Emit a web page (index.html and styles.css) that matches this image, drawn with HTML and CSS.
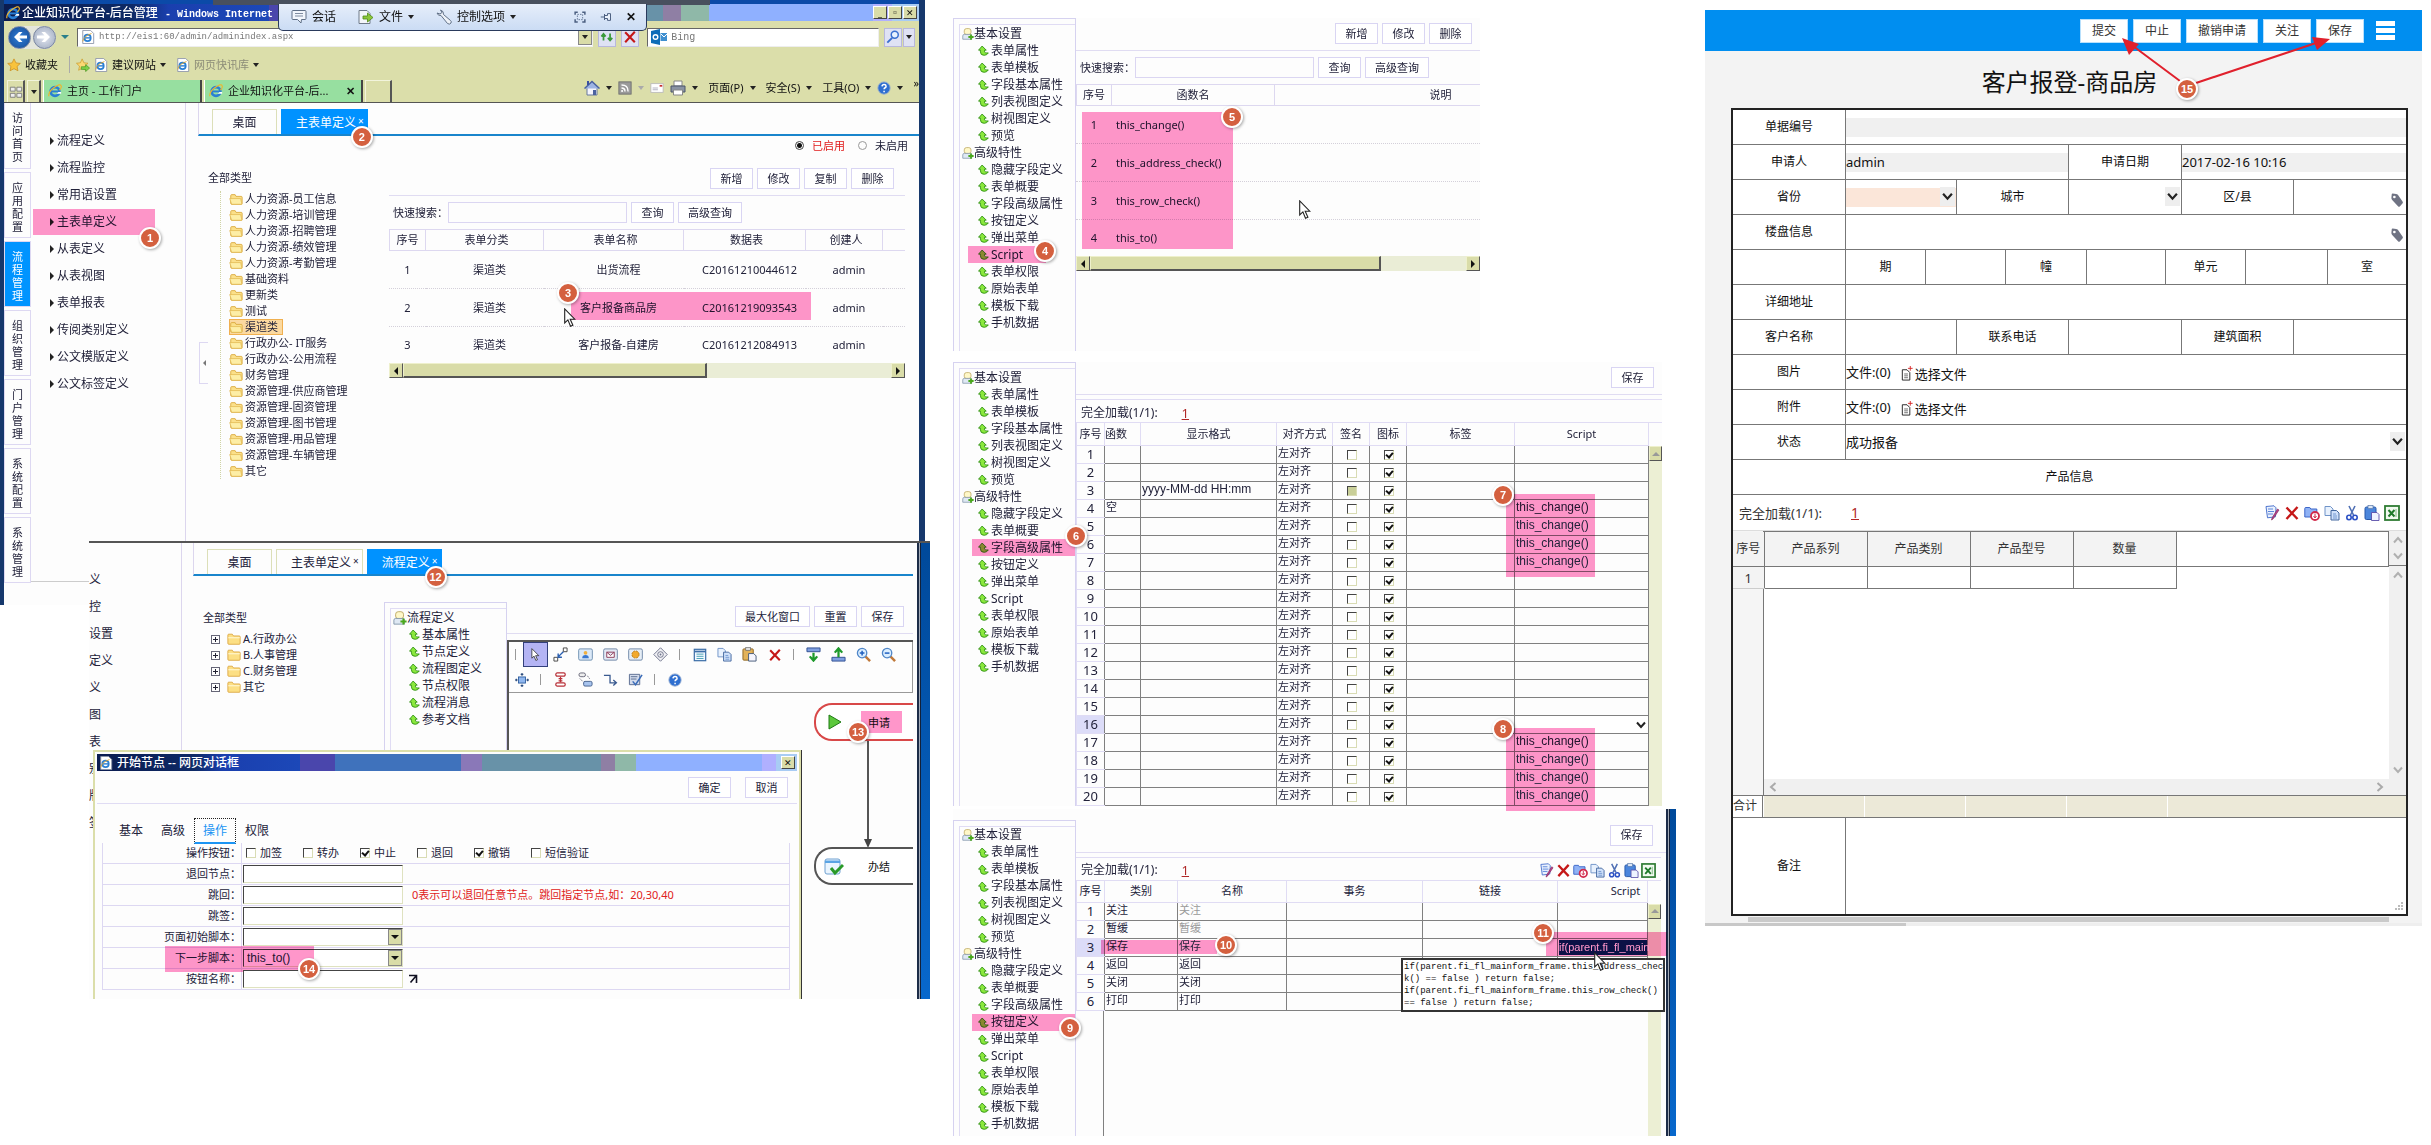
FILE: index.html
```html
<!DOCTYPE html>
<html lang="zh-CN">
<head>
<meta charset="utf-8">
<title>企业知识化平台-后台管理</title>
<link rel="stylesheet" href="styles.css">
</head>
<body>
<svg class="sprite" aria-hidden="true">
  <symbol id="ie" viewBox="0 0 16 16"><circle cx="8" cy="8.500" r="5" fill="none" stroke="#2a7fd4" stroke-width="3"/><path d="M3 8.500h10" stroke="#2a7fd4" stroke-width="2.200"/><path d="M10 11h5v-2h-3z" fill="#fff"/><path d="M1 14Q0 9 7 4t8-2q1 2-2 5" fill="none" stroke="#f0b52c" stroke-width="1.300"/></symbol>
  <symbol id="iepage" viewBox="0 0 16 16"><path d="M2 .500h9l3.500 3.500v11.500H2z" fill="#fff" stroke="#8a93a8"/><circle cx="7.500" cy="9" r="3.600" fill="none" stroke="#2a7fd4" stroke-width="2"/><path d="M4 9h7" stroke="#2a7fd4" stroke-width="1.600"/><path d="M2 13Q3 7 12 4" fill="none" stroke="#e0a52c"/></symbol>
  <symbol id="folder" viewBox="0 0 16 16"><path d="M2 4q0-1 1-1h4l1 2h6q1 0 1 1v7q0 1-1 1H3q-1 0-1-1z" fill="#fbe08a" stroke="#d9a83a"/><path d="M.800 7.500h12.500l1.500 6.500H3z" fill="#fdeea6" stroke="#e0b44c" stroke-width=".8"/></symbol>
  <symbol id="folderc" viewBox="0 0 16 16"><path d="M1 3.500q0-1 1-1h4l1.500 2H14q1 0 1 1V13q0 1-1 1H2q-1 0-1-1z" fill="#fcdf84" stroke="#dba640"/><path d="M1.500 6.500h13" stroke="#fff3c4" stroke-width="1.500"/></symbol>
  <symbol id="go" viewBox="0 0 16 16"><path d="M6 1.500.800 7.500H3.500V10q0 5 5.500 5 4 0 6-3.500-5 1-5.500-1.500V7.500H12z" fill="#8ae83c" stroke="#2f8f14" stroke-width="1.300" stroke-linejoin="round"/></symbol>
  <symbol id="group" viewBox="0 0 16 16"><rect x="3" y=".800" width="9" height="8" rx="3" fill="#fff8c8" stroke="#b9a45c"/><path d="M1 15V10.500q0-2 2-2h8q2 0 2 2V15z" fill="#dfe9f4" stroke="#7f93a8"/><path d="M12 8.500v7M8.500 12h7" stroke="#4aa81c" stroke-width="2.400"/></symbol>
  <symbol id="edit" viewBox="0 0 16 16"><path d="M2 1.500 10 .800l2 2-.500 9-8 1z" fill="#eaf1fd" stroke="#4f76cf"/><path d="M4 4h5M4 6.500h6M4 9h5" stroke="#5c86dc"/><path d="m15 5-6 9-1.500 1 .500-2 5.500-9z" fill="#b8418c" stroke="#7b2150" stroke-width=".6"/></symbol>
  <symbol id="del" viewBox="0 0 16 16"><path d="M2.500 2.500 13.500 14M13.500 2 2.500 14" stroke="#c51818" stroke-width="2.400" fill="none"/></symbol>
  <symbol id="fdel" viewBox="0 0 16 16"><path d="M.800 3.500q0-1 1-1h4l1 1.500h6v8H.800z" fill="#8fb2f5" stroke="#3d66c8"/><circle cx="11" cy="11" r="4" fill="#fff" stroke="#d12a4a" stroke-width="1.800"/><path d="M11 8.500V12M9.500 11l1.500 2 1.500-2" stroke="#d12a4a" fill="none"/></symbol>
  <symbol id="copy" viewBox="0 0 16 16"><path d="M1 1.500h5.500l2.500 2.500v6.500H1z" fill="#e8f1fd" stroke="#6f93c8"/><path d="M7 5.500h5.500L15 8v7H7z" fill="#cfe1fa" stroke="#44699f"/><path d="M9 9h3M9 11h4M9 13h4" stroke="#5c86c4" stroke-width=".8"/></symbol>
  <symbol id="cut" viewBox="0 0 16 16"><path d="M5 1 9.500 10M11 1 6.500 10" stroke="#4f6fb4" stroke-width="1.600"/><circle cx="5" cy="12.500" r="2.200" fill="none" stroke="#2b50c4" stroke-width="1.600"/><circle cx="11" cy="12.500" r="2.200" fill="none" stroke="#2b50c4" stroke-width="1.600"/></symbol>
  <symbol id="paste" viewBox="0 0 16 16"><rect x="1" y="2" width="11" height="12.500" rx="1.500" fill="#4b86dc" stroke="#2657a8"/><rect x="4" y=".600" width="5" height="3" fill="#dbe6f6" stroke="#5878a8" stroke-width=".7"/><path d="M7.500 7.500H13l2 2v6H7.500z" fill="#eef3ff" stroke="#5a4ea8" stroke-width=".9"/></symbol>
  <symbol id="pasteo" viewBox="0 0 16 16"><rect x="1" y="2" width="11" height="12" rx="1" fill="#e2b25a" stroke="#8c6420"/><rect x="4" y=".600" width="5" height="3" fill="#ddd" stroke="#666" stroke-width=".7"/><path d="M7 7h5.500L15 9.500V15H7z" fill="#f6f6ff" stroke="#445a78"/></symbol>
  <symbol id="xls" viewBox="0 0 16 16"><rect x="1" y="1" width="14" height="14" fill="#f2faf0" stroke="#2f7c33" stroke-width="1.800"/><path d="m4.500 5 6 6.500M10.500 5l-6 6.500" stroke="#1f7a2a" stroke-width="2"/><path d="M12 4v8" stroke="#80b884"/></symbol>
  <symbol id="tag" viewBox="0 0 16 16"><path d="M2 1.500q0-1 1-1l4 .500q1 0 2 1l5.500 8q.700 1-.300 2l-3 3.500q-1 .800-1.800-.200L2.500 8Q1.500 7 1.600 5.500z" fill="#6f7383"/><circle cx="5" cy="4.500" r="1.500" fill="#fff"/></symbol>
  <symbol id="cursor" viewBox="0 0 12 19"><path d="M.700.900v14l3.200-3 2.600 6.300 2.400-1-2.700-6h4.600z" fill="#fff" stroke="#222" stroke-width="1.100"/></symbol>
  <symbol id="file" viewBox="0 0 12 16"><path d="M1 4h5l3 3v8H1z" fill="#fff" stroke="#222"/><path d="M3 8.500h4M3 10.500h4M3 12.500h4" stroke="#444" stroke-width=".8"/><path d="M9.500 0v5M7 2.500h5" stroke="#d62a2a"/></symbol>
  <symbol id="star" viewBox="0 0 16 16"><path d="m8 1 2.200 4.600 5 .600-3.700 3.400 1 5L8 12.200 3.500 14.600l1-5L.800 6.200l5-.600z" fill="#f8c33c" stroke="#c98a1a" stroke-width=".8"/></symbol>
  <symbol id="staradd" viewBox="0 0 16 16"><path d="m7 1 2 4.500 4.700.500-3.500 3.300 1 4.700L7 11.700 3 14l1-4.700L.500 6l4.500-.500z" fill="#fbd873" stroke="#c99a2a" stroke-width=".8"/><path d="M6 10h5V7.500l4.500 4-4.500 4V13H6z" fill="#7fd14a" stroke="#3b8f1c" stroke-width=".7"/></symbol>
  <symbol id="chat" viewBox="0 0 16 16"><path d="M2 1.500h12q1 0 1 1v7q0 1-1 1h-3.500L10 14l-3.500-3.500H2q-1 0-1-1v-7q0-1 1-1z" fill="#f2f6fc" stroke="#5f6f86"/><path d="M4 4.500h8M4 7h8" stroke="#7f8ca0"/></symbol>
  <symbol id="send" viewBox="0 0 16 16"><path d="M1 1.500h8l3 3v10H1z" fill="#f4f6fa" stroke="#6f7a88"/><path d="M5 7h4.500V4l5.500 4.500L9.500 13v-3H5z" fill="#8cc63a" stroke="#4f8a14" stroke-width=".8"/></symbol>
  <symbol id="wrench" viewBox="0 0 16 16"><path d="M1 4q1 3 4 2.500l6.500 8q2 1.500 3.500-.500.800-1.500-.500-2.500L7.500 5.500Q8 2 4.500 1L6 3.500 4 5z" fill="#eef2f8" stroke="#5f6f86"/></symbol>
  <symbol id="full" viewBox="0 0 16 16"><path d="M1.500 5V1.500H5M11 1.500h3.500V5M14.500 11v3.500H11M5 14.500H1.500V11" fill="none" stroke="#4b5f80" stroke-width="2"/><path d="M4.500 4.500h7v7h-7z" fill="none" stroke="#4b5f80" stroke-dasharray="2 1.500"/></symbol>
  <symbol id="pinb" viewBox="0 0 16 16"><path d="M1 8h5M6 4v8M6 6h4V3.500h4v9h-4V10H6z" fill="#eaf1fb" stroke="#4b5f80" stroke-width="1.300"/></symbol>
  <symbol id="arrowl" viewBox="0 0 16 16"><path d="M15 6.500H7.500l3-3.500H7L2 8l5 5h3.500l-3-3.500H15z" fill="#fff"/></symbol>
  <symbol id="refresh" viewBox="0 0 16 16"><path d="M4 12V5M1.500 7.500 4 4.500l2.500 3M11.500 4v7M9 9l2.500 3L14 9" fill="none" stroke="#3b9a3b" stroke-width="2"/></symbol>
  <symbol id="search" viewBox="0 0 16 16"><circle cx="10" cy="5.500" r="4" fill="#e8f2ff" stroke="#3a6fd0" stroke-width="1.700"/><path d="m7 9-5.500 5.500" stroke="#3a6fd0" stroke-width="2.200"/></symbol>
  <symbol id="bing" viewBox="0 0 16 16"><path d="M0 2 9 0v16l-9-2z" fill="#0f6db8"/><circle cx="4.500" cy="8" r="2.300" fill="none" stroke="#fff" stroke-width="1.400"/><path d="M9.500 4H16v8H9.500z" fill="#3f8fd0"/><path d="m10 5 3 3 3-3" fill="none" stroke="#fff"/></symbol>
  <symbol id="quad" viewBox="0 0 16 16"><path d="M1.500 2.500h5.500v4.500H1.500zM9 2.500h5.500v4.500H9zM1.500 9.500h5.500v4.500H1.500zM9 9.500h5.500v4.500H9z" fill="#eee" stroke="#777"/></symbol>
  <symbol id="home" viewBox="0 0 16 16"><path d="M3 8v7h10V8" fill="#f4f4fc" stroke="#66789c"/><path d="M.500 8.500 8 1.500l7.500 7" fill="#9db4e4" stroke="#4a62a0" stroke-width="1.500"/><path d="M9 10h3v5H9z" fill="#4a62a0"/><path d="M3 1h2v4H3z" fill="#3a50a0"/></symbol>
  <symbol id="rss" viewBox="0 0 16 16"><rect x="1" y="1" width="14" height="14" fill="#9a9a9a" stroke="#6c6c6c"/><path d="M4 4.500q7.500 0 7.500 7.500M4 8q4 0 4 4" fill="none" stroke="#fff" stroke-width="1.600"/><circle cx="4.700" cy="11.500" r="1.200" fill="#fff"/></symbol>
  <symbol id="mail" viewBox="0 0 16 16"><rect x="1" y="3" width="14" height="10" fill="#fff" stroke="#bbb"/><path d="M11 4.500h3v2h-3z" fill="#c83030"/><path d="M3 8h6M3 10h6" stroke="#aab"/></symbol>
  <symbol id="print" viewBox="0 0 16 16"><path d="M4 1h8v5H4z" fill="#fff" stroke="#888"/><path d="M1 6h14v6H1z" fill="#8a93a3" stroke="#4a5568"/><path d="M3.500 10h9v5h-9z" fill="#fff" stroke="#888"/></symbol>
  <symbol id="help" viewBox="0 0 16 16"><circle cx="8" cy="8" r="7" fill="#2f6fd0" stroke="#8fa8d0"/><path d="M5.700 6.200q.200-2.200 2.400-2.200t2.300 2q0 1.300-1.500 2-.800.500-.800 1.500M8.100 11v1.800" fill="none" stroke="#fff" stroke-width="1.700"/></symbol>
  <symbol id="link" viewBox="0 0 16 16"><path d="M1 11h4v4H1zM11 1h4v4h-4z" fill="#fff" stroke="#444"/><path d="m11 5-5 5M5.500 7v4h4" fill="none" stroke="#2a5fb0" stroke-width="1.500"/></symbol>
  <symbol id="nuser" viewBox="0 0 16 16"><rect x=".700" y="2" width="14.600" height="12" rx="1.500" fill="#dbe9f8" stroke="#6f8fb0"/><circle cx="8" cy="6.200" r="2" fill="#f0b040"/><path d="M4.500 12q0-3.500 3.500-3.500t3.500 3.500z" fill="#3a78d0"/></symbol>
  <symbol id="nmail" viewBox="0 0 16 16"><rect x=".700" y="2" width="14.600" height="12" rx="1.500" fill="#e4e9f4" stroke="#7088a8"/><path d="M4 5.500h8v5.500H4zM4 5.500 8 9l4-3.500" fill="#fff" stroke="#8c3a58"/></symbol>
  <symbol id="ngear" viewBox="0 0 16 16"><rect x=".700" y="2" width="14.600" height="12" rx="1.500" fill="#e6eef6" stroke="#7088a8"/><circle cx="8" cy="8" r="3.800" fill="#f2a92c" stroke="#b87a14" stroke-dasharray="2 1"/></symbol>
  <symbol id="ndia" viewBox="0 0 16 16"><path d="M8 .800 15.200 8 8 15.200.800 8z" fill="#f0f0f4" stroke="#70748c"/><circle cx="8" cy="8" r="3" fill="none" stroke="#70748c"/><circle cx="8" cy="8" r="1" fill="#70748c"/></symbol>
  <symbol id="form" viewBox="0 0 16 16"><rect x="1.500" y="1.500" width="13" height="13" fill="#f2f8ff" stroke="#3d6fa8" stroke-width="1.400"/><path d="M1.500 4h13" stroke="#3d6fa8" stroke-width="2"/><path d="M4 7h8M4 9.500h8M4 12h8" stroke="#3a9ab0"/></symbol>
  <symbol id="down" viewBox="0 0 16 16"><path d="M1 1h14v4H1z" fill="#7f9fe0" stroke="#304f90"/><path d="M8 6v8M4 10l4 4.500 4-4.500" fill="none" stroke="#1f9a2c" stroke-width="2.400"/></symbol>
  <symbol id="up" viewBox="0 0 16 16"><path d="M1 11h14v4H1z" fill="#7f9fe0" stroke="#304f90"/><path d="M8 11V2M4 6l4-4.500L12 6" fill="none" stroke="#1f9a2c" stroke-width="2.400"/></symbol>
  <symbol id="zin" viewBox="0 0 16 16"><path d="m10 10 5 5" stroke="#c0793a" stroke-width="2.600"/><circle cx="6.500" cy="6.500" r="5" fill="#dcefff" stroke="#4f86c8" stroke-width="1.400"/><path d="M4 6.500h5M6.500 4v5" stroke="#1f5fc0" stroke-width="1.600"/></symbol>
  <symbol id="zout" viewBox="0 0 16 16"><path d="m10 10 5 5" stroke="#c0793a" stroke-width="2.600"/><circle cx="6.500" cy="6.500" r="5" fill="#dcefff" stroke="#4f86c8" stroke-width="1.400"/><path d="M4 6.500h5" stroke="#1f5fc0" stroke-width="1.600"/></symbol>
  <symbol id="fit" viewBox="0 0 16 16"><rect x="4" y="4.500" width="8" height="7" fill="#8fb6ee" stroke="#2a5a9c"/><path d="M8 0v3M8 13v3M0 8h3M13 8h3M6.500 1.500h3M6.500 14.500h3M1.500 6.500v3M14.500 6.500v3" stroke="#2a4a7c" stroke-width="1.300"/></symbol>
  <symbol id="align" viewBox="0 0 16 16"><rect x="3" y="1" width="10" height="3.500" rx="1.500" fill="#fff" stroke="#b83038" stroke-width="1.300"/><rect x="3" y="11.500" width="10" height="3.500" rx="1.500" fill="#fff" stroke="#b83038" stroke-width="1.300"/><path d="M8 5v6M6 7h4M6 9.500h4" stroke="#b83038" stroke-width="1.300"/></symbol>
  <symbol id="stack" viewBox="0 0 16 16"><rect x="1" y="1" width="7" height="4" rx="2" fill="#eee" stroke="#667"/><rect x="6" y="10" width="9" height="5" rx="1.500" fill="#a8c4ee" stroke="#44608c"/><path d="M2 7l3 3M10 4l3 4" stroke="#667" stroke-dasharray="1.500 1"/></symbol>
  <symbol id="step" viewBox="0 0 16 16"><path d="M1 3.500h6.500v8H14M11 8.500l3.300 3-3.300 3" fill="none" stroke="#3a5a90" stroke-width="1.400"/></symbol>
  <symbol id="check" viewBox="0 0 16 16"><path d="M1.500 2.500h11v11h-11z" fill="#d4dcec" stroke="#5a6c90"/><path d="M3 5h7M3 7.500h6" stroke="#5a6c90"/><path d="m5 10 3 3.500L15 3" fill="none" stroke="#3a6cb8" stroke-width="1.600"/></symbol>
  <symbol id="done" viewBox="0 0 20 18"><rect x="1" y="1" width="15" height="15" rx="2" fill="#eaf5ff" stroke="#6fa0d0"/><path d="M1 2.500h15V5H1z" fill="#5aa4e4"/><path d="m7 10 4 5 8-8" fill="none" stroke="#2a9a28" stroke-width="3"/></symbol>
  <symbol id="chev" viewBox="0 0 10 8"><path d="m1 1.500 4 4.500 4-4.500" fill="none" stroke="currentColor" stroke-width="2"/></symbol>
</svg>

<main class="board">
  <div class="col col-left">
    <section class="ie">
      <header class="ie-title bar-gradient">
        <svg class="i14"><use href="#ie"/></svg>
        <h1 class="win-title">企业知识化平台-后台管理 <span class="mono">- Windows Internet</span></h1>
        <span class="win-btns"><button type="button" aria-label="最小化">_</button><button type="button" aria-label="还原">▫</button><button type="button" aria-label="关闭">✕</button></span>
      </header>
      <div class="remote">
        <button type="button"><svg class="i16"><use href="#chat"/></svg>会话</button>
        <button type="button"><svg class="i16"><use href="#send"/></svg>文件<i class="tri"></i></button>
        <button type="button"><svg class="i16"><use href="#wrench"/></svg>控制选项<i class="tri"></i></button>
        <span class="remote-tools"><svg class="i12"><use href="#full"/></svg><svg class="i12"><use href="#pinb"/></svg><b>✕</b></span>
      </div>
      <div class="ie-address">
        <span class="navs"><button type="button" class="nav back" aria-label="后退"><svg class="i16"><use href="#arrowl"/></svg></button><button type="button" class="nav fwd" aria-label="前进"><svg class="i16"><use href="#arrowl"/></svg></button></span>
        <i class="tri teal"></i>
        <label class="url"><svg class="i14"><use href="#iepage"/></svg><input type="text" aria-label="地址" value="http://eis1:60/admin/adminindex.aspx"><button type="button" class="drop" aria-label="展开"><i class="tri"></i></button></label>
        <button type="button" class="abtn" aria-label="刷新"><svg class="i14"><use href="#refresh"/></svg></button>
        <button type="button" class="abtn" aria-label="停止"><svg class="i14"><use href="#del"/></svg></button>
        <label class="url bing"><svg class="i16"><use href="#bing"/></svg><input type="text" aria-label="搜索" value="Bing"></label>
        <button type="button" class="abtn" aria-label="搜索"><svg class="i14"><use href="#search"/></svg></button>
        <button type="button" class="abtn slim" aria-label="搜索选项"><i class="tri"></i></button>
      </div>
      <div class="ie-favs">
        <svg class="i14"><use href="#star"/></svg><span>收藏夹</span><i class="vline"></i>
        <svg class="i14"><use href="#staradd"/></svg>
        <svg class="i14"><use href="#iepage"/></svg><span>建议网站</span><i class="tri"></i>
        <svg class="i14 gap"><use href="#iepage"/></svg><span class="dim">网页快讯库</span><i class="tri"></i>
      </div>
      <div class="ie-tabs">
        <button type="button" class="qt" aria-label="快速导航选项卡"><svg class="i14"><use href="#quad"/></svg></button>
        <button type="button" class="qt qd" aria-label="选项卡列表"><i class="tri"></i></button>
        <a class="ie-tab" href="#portal"><svg class="i14"><use href="#ie"/></svg>主页 - 工作门户</a>
        <a class="ie-tab" href="#admin"><svg class="i14"><use href="#ie"/></svg>企业知识化平台-后...<b>✕</b></a>
        <span class="newtab"></span>
        <div class="cmds">
          <svg class="i16"><use href="#home"/></svg><i class="tri"></i>
          <svg class="i14"><use href="#rss"/></svg><i class="tri pale"></i>
          <svg class="i14"><use href="#mail"/></svg>
          <svg class="i16"><use href="#print"/></svg><i class="tri"></i>
          <span>页面(P)</span><i class="tri"></i>
          <span>安全(S)</span><i class="tri"></i>
          <span>工具(O)</span><i class="tri"></i>
          <svg class="i14"><use href="#help"/></svg><i class="tri"></i><span class="more">»</span>
        </div>
      </div>
      <div class="ie-body">
        <nav class="side">
          <a href="#m1">访<br>问<br>首<br>页</a>
          <a href="#m2">应<br>用<br>配<br>置</a>
          <a href="#m3" class="on">流<br>程<br>管<br>理</a>
          <a href="#m4">组<br>织<br>管<br>理</a>
          <a href="#m5">门<br>户<br>管<br>理</a>
          <a href="#m6">系<br>统<br>配<br>置</a>
          <a href="#m7">系<br>统<br>管<br>理</a>
        </nav>
        <nav class="menu">
          <a href="#a1">流程定义</a>
          <a href="#a2">流程监控</a>
          <a href="#a3">常用语设置</a>
          <a href="#a4" class="rel">主表单定义<span class="hl hl-menu"><b class="pin br">1</b></span></a>
          <a href="#a5">从表定义</a>
          <a href="#a6">从表视图</a>
          <a href="#a7">表单报表</a>
          <a href="#a8">传阅类别定义</a>
          <a href="#a9">公文模版定义</a>
          <a href="#a10">公文标签定义</a>
        </nav>
        <div class="work">
          <div class="tabs">
            <a class="tab" href="#t1">桌面</a>
            <a class="tab on" href="#t2">主表单定义<small>×</small><b class="pin br">2</b></a>
          </div>
          <div class="work-row">
            <div class="cats">
              <p class="cats-title">全部类型</p>
              <ul class="tree open">
                <li><svg class="i14"><use href="#folder"/></svg>人力资源-员工信息</li>
                <li><svg class="i14"><use href="#folder"/></svg>人力资源-培训管理</li>
                <li><svg class="i14"><use href="#folder"/></svg>人力资源-招聘管理</li>
                <li><svg class="i14"><use href="#folder"/></svg>人力资源-绩效管理</li>
                <li><svg class="i14"><use href="#folder"/></svg>人力资源-考勤管理</li>
                <li><svg class="i14"><use href="#folder"/></svg>基础资料</li>
                <li><svg class="i14"><use href="#folder"/></svg>更新类</li>
                <li><svg class="i14"><use href="#folder"/></svg>测试</li>
                <li><span class="sel"><svg class="i14"><use href="#folder"/></svg>渠道类</span></li>
                <li><svg class="i14"><use href="#folder"/></svg>行政办公- IT服务</li>
                <li><svg class="i14"><use href="#folder"/></svg>行政办公-公用流程</li>
                <li><svg class="i14"><use href="#folder"/></svg>财务管理</li>
                <li><svg class="i14"><use href="#folder"/></svg>资源管理-供应商管理</li>
                <li><svg class="i14"><use href="#folder"/></svg>资源管理-固资管理</li>
                <li><svg class="i14"><use href="#folder"/></svg>资源管理-图书管理</li>
                <li><svg class="i14"><use href="#folder"/></svg>资源管理-用品管理</li>
                <li><svg class="i14"><use href="#folder"/></svg>资源管理-车辆管理</li>
                <li><svg class="i14"><use href="#folder"/></svg>其它</li>
              </ul>
              <span class="splitter"><i></i></span>
            </div>
            <div class="list">
              <div class="radios">
                <label class="red"><input type="radio" name="use" checked>已启用</label>
                <label><input type="radio" name="use">未启用</label>
              </div>
              <div class="query">
                <div class="q-btns"><button type="button" class="btn">新增</button><button type="button" class="btn">修改</button><button type="button" class="btn">复制</button><button type="button" class="btn">删除</button></div>
                <div class="q-search"><label for="q1">快速搜索：</label><input id="q1" type="text"><button type="button" class="btn">查询</button><button type="button" class="btn">高级查询</button></div>
                <div class="rel">
                  <table class="qt-table forms">
                    <thead><tr><th>序号</th><th>表单分类</th><th>表单名称</th><th>数据表</th><th>创建人</th><th></th></tr></thead>
                    <tbody>
                      <tr><td>1</td><td>渠道类</td><td>出货流程</td><td>C20161210044612</td><td>admin</td><td></td></tr>
                      <tr><td>2</td><td>渠道类</td><td>客户报备商品房</td><td>C20161219093543</td><td>admin</td><td></td></tr>
                      <tr><td>3</td><td>渠道类</td><td>客户报备-自建房</td><td>C20161212084913</td><td>admin</td><td></td></tr>
                    </tbody>
                  </table>
                  <span class="hl hl-row"><b class="pin tl">3</b></span>
                  <svg class="cursor c-list"><use href="#cursor"/></svg>
                </div>
                <div class="hbar"><i class="sb l"></i><i class="thumb t62"></i><i class="sb r"></i></div>
              </div>
            </div>
          </div>
        </div>
      </div>
    </section>

    <section class="flow">
      <nav class="cutmenu"><span>义</span><span>控</span><span>设置</span><span>定义</span><span>义</span><span>图</span><span>表</span><span>别</span><span>版</span><span>签</span></nav>
      <div class="work">
        <div class="tabs">
          <a class="tab" href="#f1">桌面</a>
          <a class="tab" href="#f2">主表单定义<small>×</small></a>
          <a class="tab on" href="#f3">流程定义<small>×</small><b class="pin br">12</b></a>
        </div>
        <div class="work-row">
          <div class="cats">
            <p class="cats-title">全部类型</p>
            <ul class="tree closed">
              <li><i class="plus"></i><svg class="i14"><use href="#folderc"/></svg>A.行政办公</li>
              <li><i class="plus"></i><svg class="i14"><use href="#folderc"/></svg>B.人事管理</li>
              <li><i class="plus"></i><svg class="i14"><use href="#folderc"/></svg>C.财务管理</li>
              <li><i class="plus"></i><svg class="i14"><use href="#folderc"/></svg>其它</li>
            </ul>
          </div>
          <nav class="navbox nav-flow"><ul>
            <li class="grp"><svg class="i14"><use href="#group"/></svg>流程定义</li>
            <li><svg class="i11"><use href="#go"/></svg>基本属性</li>
            <li><svg class="i11"><use href="#go"/></svg>节点定义</li>
            <li><svg class="i11"><use href="#go"/></svg>流程图定义</li>
            <li><svg class="i11"><use href="#go"/></svg>节点权限</li>
            <li><svg class="i11"><use href="#go"/></svg>流程消息</li>
            <li><svg class="i11"><use href="#go"/></svg>参考文档</li>
          </ul></nav>
          <div class="designer">
            <div class="q-btns"><button type="button" class="btn">最大化窗口</button><button type="button" class="btn">重置</button><button type="button" class="btn">保存</button></div>
            <div class="canvas">
              <div class="tools">
                <div class="toolrow"><i class="sep"></i><b class="t on"><svg class="ptr"><use href="#cursor"/></svg></b><b class="t"><svg class="i15"><use href="#link"/></svg></b><b class="t"><svg class="i15"><use href="#nuser"/></svg></b><b class="t"><svg class="i15"><use href="#nmail"/></svg></b><b class="t"><svg class="i15"><use href="#ngear"/></svg></b><b class="t"><svg class="i15"><use href="#ndia"/></svg></b><i class="sep"></i><b class="t"><svg class="i14"><use href="#form"/></svg></b><b class="t"><svg class="i15"><use href="#copy"/></svg></b><b class="t"><svg class="i15"><use href="#pasteo"/></svg></b><b class="t"><svg class="i14"><use href="#del"/></svg></b><i class="sep"></i><b class="t"><svg class="i15"><use href="#down"/></svg></b><b class="t"><svg class="i15"><use href="#up"/></svg></b><b class="t"><svg class="i15"><use href="#zin"/></svg></b><b class="t"><svg class="i15"><use href="#zout"/></svg></b></div>
                <div class="toolrow"><b class="t"><svg class="i14"><use href="#fit"/></svg></b><i class="sep"></i><b class="t"><svg class="i15"><use href="#align"/></svg></b><b class="t"><svg class="i15"><use href="#stack"/></svg></b><b class="t"><svg class="i15"><use href="#step"/></svg></b><b class="t"><svg class="i15"><use href="#check"/></svg></b><i class="sep"></i><b class="t"><svg class="i14"><use href="#help"/></svg></b></div>
              </div>
              <div class="node start"><svg class="play" viewBox="0 0 14 16"><path d="m1 1 12 7L1 15z" fill="#5cc83c" stroke="#1f7a14"/></svg><span>申请</span><i class="hl hl-node"><b class="pin bl">13</b></i></div>
              <svg class="wire" viewBox="0 0 10 107"><path d="M5 0v98" stroke="#555" stroke-width="2"/><path d="M1 98h8l-4 9z" fill="#444"/></svg>
              <div class="node end"><svg class="done"><use href="#done"/></svg><span>办结</span></div>
            </div>
          </div>
        </div>
      </div>
      <div class="edge"></div>

      <form class="dialog">
        <header class="dlg-title bar-gradient"><svg class="i14"><use href="#iepage"/></svg><h2 class="win-title">开始节点 -- 网页对话框</h2><span class="win-btns"><button type="button" aria-label="关闭">✕</button></span></header>
        <div class="dlg-btns"><button type="button" class="btn">确定</button><button type="button" class="btn">取消</button></div>
        <div class="dlg-tabs"><a href="#d1">基本</a><a href="#d2">高级</a><a href="#d3" class="on">操作</a><a href="#d4">权限</a></div>
        <div class="fields">
          <div class="field"><span class="lab">操作按钮：</span><span class="val checks"><label><input type="checkbox">加签</label><label><input type="checkbox">转办</label><label><input type="checkbox" checked>中止</label><label><input type="checkbox">退回</label><label><input type="checkbox" checked>撤销</label><label><input type="checkbox">短信验证</label></span></div>
          <div class="field"><label class="lab" for="d-a">退回节点：</label><span class="val"><input id="d-a" type="text"></span></div>
          <div class="field"><label class="lab" for="d-b">跳回：</label><span class="val"><input id="d-b" type="text"><em>0表示可以退回任意节点。跳回指定节点,如：20,30,40</em></span></div>
          <div class="field"><label class="lab" for="d-c">跳签：</label><span class="val"><input id="d-c" type="text"></span></div>
          <div class="field"><label class="lab" for="d-d">页面初始脚本：</label><span class="val"><select id="d-d"><option></option></select><i class="selbtn"></i></span></div>
          <div class="field rel"><label class="lab" for="d-e">下一步脚本：</label><span class="val"><select id="d-e"><option>this_to()</option></select><i class="selbtn"></i></span><i class="hl hl-next"><b class="pin br">14</b></i></div>
          <div class="field"><label class="lab" for="d-f">按钮名称：</label><span class="val"><input id="d-f" type="text"><svg class="i10" viewBox="0 0 10 10"><path d="M1 1.500h7.500V9M8 2 2.500 8.500" fill="none" stroke="#112" stroke-width="1.600"/></svg></span></div>
        </div>
      </form>
    </section>
  </div>

  <div class="col col-mid">
    <section class="shot shot-a">
      <nav class="navbox"><ul>
        <li class="grp"><svg class="i12"><use href="#group"/></svg>基本设置</li>
        <li><svg class="i11"><use href="#go"/></svg>表单属性</li>
        <li><svg class="i11"><use href="#go"/></svg>表单模板</li>
        <li><svg class="i11"><use href="#go"/></svg>字段基本属性</li>
        <li><svg class="i11"><use href="#go"/></svg>列表视图定义</li>
        <li><svg class="i11"><use href="#go"/></svg>树视图定义</li>
        <li><svg class="i11"><use href="#go"/></svg>预览</li>
        <li class="grp"><svg class="i12"><use href="#group"/></svg>高级特性</li>
        <li><svg class="i11"><use href="#go"/></svg>隐藏字段定义</li>
        <li><svg class="i11"><use href="#go"/></svg>表单概要</li>
        <li><svg class="i11"><use href="#go"/></svg>字段高级属性</li>
        <li><svg class="i11"><use href="#go"/></svg>按钮定义</li>
        <li><svg class="i11"><use href="#go"/></svg>弹出菜单</li>
        <li><svg class="i11"><use href="#go"/></svg>Script<i class="hl hl-nav short"><b class="pin tr">4</b></i></li>
        <li><svg class="i11"><use href="#go"/></svg>表单权限</li>
        <li><svg class="i11"><use href="#go"/></svg>原始表单</li>
        <li><svg class="i11"><use href="#go"/></svg>模板下载</li>
        <li><svg class="i11"><use href="#go"/></svg>手机数据</li>
      </ul></nav>
      <div class="query">
        <div class="q-btns"><button type="button" class="btn">新增</button><button type="button" class="btn">修改</button><button type="button" class="btn">删除</button></div>
        <div class="q-search"><label for="q2">快速搜索：</label><input id="q2" type="text"><button type="button" class="btn">查询</button><button type="button" class="btn">高级查询</button></div>
        <div class="rel">
          <table class="qt-table funcs">
            <thead><tr><th>序号</th><th>函数名</th><th>说明</th></tr></thead>
            <tbody>
              <tr><td>1</td><td>this_change()</td><td></td></tr>
              <tr><td>2</td><td>this_address_check()</td><td></td></tr>
              <tr><td>3</td><td>this_row_check()</td><td></td></tr>
              <tr><td>4</td><td>this_to()</td><td></td></tr>
            </tbody>
          </table>
          <span class="hl hl-funcs"><b class="pin tr">5</b></span>
          <svg class="cursor c-funcs"><use href="#cursor"/></svg>
        </div>
        <div class="hbar"><i class="sb l"></i><i class="thumb t77"></i><i class="sb r"></i></div>
      </div>
    </section>

    <section class="shot shot-b">
      <nav class="navbox"><ul>
        <li class="grp"><svg class="i12"><use href="#group"/></svg>基本设置</li>
        <li><svg class="i11"><use href="#go"/></svg>表单属性</li>
        <li><svg class="i11"><use href="#go"/></svg>表单模板</li>
        <li><svg class="i11"><use href="#go"/></svg>字段基本属性</li>
        <li><svg class="i11"><use href="#go"/></svg>列表视图定义</li>
        <li><svg class="i11"><use href="#go"/></svg>树视图定义</li>
        <li><svg class="i11"><use href="#go"/></svg>预览</li>
        <li class="grp"><svg class="i12"><use href="#group"/></svg>高级特性</li>
        <li><svg class="i11"><use href="#go"/></svg>隐藏字段定义</li>
        <li><svg class="i11"><use href="#go"/></svg>表单概要</li>
        <li><svg class="i11"><use href="#go"/></svg>字段高级属性<i class="hl hl-nav"><b class="pin above">6</b></i></li>
        <li><svg class="i11"><use href="#go"/></svg>按钮定义</li>
        <li><svg class="i11"><use href="#go"/></svg>弹出菜单</li>
        <li><svg class="i11"><use href="#go"/></svg>Script</li>
        <li><svg class="i11"><use href="#go"/></svg>表单权限</li>
        <li><svg class="i11"><use href="#go"/></svg>原始表单</li>
        <li><svg class="i11"><use href="#go"/></svg>模板下载</li>
        <li><svg class="i11"><use href="#go"/></svg>手机数据</li>
      </ul></nav>
      <div class="sheet">
        <div class="q-btns"><button type="button" class="btn">保存</button></div>
        <div class="pager"><span>完全加载(1/1):</span><a href="#p1">1</a></div>
        <div class="gridwrap">
          <table class="grid fieldsgrid">
            <thead><tr><th>序号</th><th class="lt">函数</th><th>显示格式</th><th>对齐方式</th><th>签名</th><th>图标</th><th>标签</th><th>Script</th></tr></thead>
            <tbody>
              <tr><td>1</td><td></td><td></td><td>左对齐</td><td><input type="checkbox" aria-label="签名"></td><td><input type="checkbox" aria-label="图标" checked></td><td></td><td></td></tr>
              <tr><td>2</td><td></td><td></td><td>左对齐</td><td><input type="checkbox" aria-label="签名"></td><td><input type="checkbox" aria-label="图标" checked></td><td></td><td></td></tr>
              <tr><td>3</td><td></td><td class="arial">yyyy-MM-dd HH:mm</td><td>左对齐</td><td><input type="checkbox" aria-label="签名" disabled></td><td><input type="checkbox" aria-label="图标" checked></td><td></td><td></td></tr>
              <tr><td>4</td><td>空</td><td></td><td>左对齐</td><td><input type="checkbox" aria-label="签名"></td><td><input type="checkbox" aria-label="图标" checked></td><td></td><td class="arial">this_change()<i class="hl hl-cells"><b class="pin tl">7</b></i></td></tr>
              <tr><td>5</td><td></td><td></td><td>左对齐</td><td><input type="checkbox" aria-label="签名"></td><td><input type="checkbox" aria-label="图标" checked></td><td></td><td class="arial">this_change()</td></tr>
              <tr><td>6</td><td></td><td></td><td>左对齐</td><td><input type="checkbox" aria-label="签名"></td><td><input type="checkbox" aria-label="图标" checked></td><td></td><td class="arial">this_change()</td></tr>
              <tr><td>7</td><td></td><td></td><td>左对齐</td><td><input type="checkbox" aria-label="签名"></td><td><input type="checkbox" aria-label="图标" checked></td><td></td><td class="arial">this_change()</td></tr>
              <tr><td>8</td><td></td><td></td><td>左对齐</td><td><input type="checkbox" aria-label="签名"></td><td><input type="checkbox" aria-label="图标" checked></td><td></td><td></td></tr>
              <tr><td>9</td><td></td><td></td><td>左对齐</td><td><input type="checkbox" aria-label="签名"></td><td><input type="checkbox" aria-label="图标" checked></td><td></td><td></td></tr>
              <tr><td>10</td><td></td><td></td><td>左对齐</td><td><input type="checkbox" aria-label="签名"></td><td><input type="checkbox" aria-label="图标" checked></td><td></td><td></td></tr>
              <tr><td>11</td><td></td><td></td><td>左对齐</td><td><input type="checkbox" aria-label="签名"></td><td><input type="checkbox" aria-label="图标" checked></td><td></td><td></td></tr>
              <tr><td>12</td><td></td><td></td><td>左对齐</td><td><input type="checkbox" aria-label="签名"></td><td><input type="checkbox" aria-label="图标" checked></td><td></td><td></td></tr>
              <tr><td>13</td><td></td><td></td><td>左对齐</td><td><input type="checkbox" aria-label="签名"></td><td><input type="checkbox" aria-label="图标" checked></td><td></td><td></td></tr>
              <tr><td>14</td><td></td><td></td><td>左对齐</td><td><input type="checkbox" aria-label="签名"></td><td><input type="checkbox" aria-label="图标" checked></td><td></td><td></td></tr>
              <tr><td>15</td><td></td><td></td><td>左对齐</td><td><input type="checkbox" aria-label="签名"></td><td><input type="checkbox" aria-label="图标" checked></td><td></td><td></td></tr>
              <tr class="cur"><td>16</td><td></td><td></td><td>左对齐</td><td><input type="checkbox" aria-label="签名"></td><td><input type="checkbox" aria-label="图标" checked></td><td></td><td><span class="cellsel"><select aria-label="Script"><option></option></select><svg><use href="#chev"/></svg></span></td></tr>
              <tr><td>17</td><td></td><td></td><td>左对齐</td><td><input type="checkbox" aria-label="签名"></td><td><input type="checkbox" aria-label="图标" checked></td><td></td><td class="arial">this_change()<i class="hl hl-cells"><b class="pin tl">8</b></i></td></tr>
              <tr><td>18</td><td></td><td></td><td>左对齐</td><td><input type="checkbox" aria-label="签名"></td><td><input type="checkbox" aria-label="图标" checked></td><td></td><td class="arial">this_change()</td></tr>
              <tr><td>19</td><td></td><td></td><td>左对齐</td><td><input type="checkbox" aria-label="签名"></td><td><input type="checkbox" aria-label="图标" checked></td><td></td><td class="arial">this_change()</td></tr>
              <tr><td>20</td><td></td><td></td><td>左对齐</td><td><input type="checkbox" aria-label="签名"></td><td><input type="checkbox" aria-label="图标" checked></td><td></td><td class="arial">this_change()</td></tr>
            </tbody>
          </table>
          <div class="vbar"><i class="sb u"></i></div>
        </div>
      </div>
    </section>

    <section class="shot shot-c">
      <nav class="navbox"><ul>
        <li class="grp"><svg class="i12"><use href="#group"/></svg>基本设置</li>
        <li><svg class="i11"><use href="#go"/></svg>表单属性</li>
        <li><svg class="i11"><use href="#go"/></svg>表单模板</li>
        <li><svg class="i11"><use href="#go"/></svg>字段基本属性</li>
        <li><svg class="i11"><use href="#go"/></svg>列表视图定义</li>
        <li><svg class="i11"><use href="#go"/></svg>树视图定义</li>
        <li><svg class="i11"><use href="#go"/></svg>预览</li>
        <li class="grp"><svg class="i12"><use href="#group"/></svg>高级特性</li>
        <li><svg class="i11"><use href="#go"/></svg>隐藏字段定义</li>
        <li><svg class="i11"><use href="#go"/></svg>表单概要</li>
        <li><svg class="i11"><use href="#go"/></svg>字段高级属性</li>
        <li><svg class="i11"><use href="#go"/></svg>按钮定义<i class="hl hl-nav"><b class="pin br">9</b></i></li>
        <li><svg class="i11"><use href="#go"/></svg>弹出菜单</li>
        <li><svg class="i11"><use href="#go"/></svg>Script</li>
        <li><svg class="i11"><use href="#go"/></svg>表单权限</li>
        <li><svg class="i11"><use href="#go"/></svg>原始表单</li>
        <li><svg class="i11"><use href="#go"/></svg>模板下载</li>
        <li><svg class="i11"><use href="#go"/></svg>手机数据</li>
      </ul></nav>
      <div class="sheet">
        <div class="q-btns"><button type="button" class="btn">保存</button></div>
        <div class="pager"><span>完全加载(1/1):</span><a href="#p1">1</a><span class="acts"><svg class="i15"><use href="#edit"/></svg><svg class="i15"><use href="#del"/></svg><svg class="i15"><use href="#fdel"/></svg><svg class="i15"><use href="#copy"/></svg><svg class="i15"><use href="#cut"/></svg><svg class="i15"><use href="#paste"/></svg><svg class="i15"><use href="#xls"/></svg></span></div>
        <div class="gridwrap">
          <table class="grid btnsgrid">
            <thead><tr><th>序号</th><th>类别</th><th>名称</th><th>事务</th><th>链接</th><th class="scr">Script</th></tr></thead>
            <tbody>
              <tr><td>1</td><td>关注</td><td class="dim">关注</td><td></td><td></td><td></td></tr>
              <tr><td>2</td><td>暂缓</td><td class="dim">暂缓</td><td></td><td></td><td></td></tr>
              <tr class="cur"><td>3</td><td>保存<i class="hl hl-save"><b class="pin rm">10</b></i></td><td>保存</td><td></td><td></td><td><span class="code">if(parent.fi_fl_main</span><i class="hl hl-code"><b class="pin tl">11</b></i></td></tr>
              <tr><td>4</td><td>返回</td><td>返回</td><td></td><td></td><td></td></tr>
              <tr><td>5</td><td>关闭</td><td>关闭</td><td></td><td></td><td></td></tr>
              <tr><td>6</td><td>打印</td><td>打印</td><td></td><td></td><td></td></tr>
            </tbody>
          </table>
          <div class="vbar"><i class="sb u"></i></div>
          <p class="tip">if(parent.fi_fl_mainform_frame.this_address_chec<br>k() == false ) return false;<br>if(parent.fi_fl_mainform_frame.this_row_check()<br>== false ) return false;</p>
          <svg class="cursor c-code"><use href="#cursor"/></svg>
        </div>
      </div>
      <div class="edge"></div>
    </section>
  </div>

  <div class="col col-right">
    <form class="report">
      <header class="rep-bar">
        <button type="button">提交</button><button type="button">中止</button><button type="button">撤销申请</button><button type="button">关注</button><button type="button">保存</button>
        <button type="button" class="burger" aria-label="菜单"><i></i><i></i><i></i></button>
      </header>
      <div class="arrows"><svg viewBox="0 0 225 65"><path d="m65 46-47-35M81 48l123-41" stroke="#e0202c" stroke-width="2"/><path d="m7 3 17 6-10 11zM215 4l-18-2 5 13z" fill="#e0202c"/></svg><b class="pin">15</b></div>
      <h2 class="rep-title">客户报登-商品房</h2>
      <div class="sheetform">
        <div class="fr r2"><label class="fl" for="f1">单据编号</label><span class="fv"><input id="f1" type="text" readonly></span></div>
        <div class="fr r4"><label class="fl" for="f2">申请人</label><span class="fv"><input id="f2" type="text" readonly value="admin"></span><label class="fl" for="f3">申请日期</label><span class="fv"><input id="f3" type="text" readonly value="2017-02-16 10:16"></span></div>
        <div class="fr r6"><label class="fl" for="f4">省份</label><span class="fv pick need"><select id="f4"><option></option></select><svg><use href="#chev"/></svg></span><label class="fl" for="f5">城市</label><span class="fv pick"><select id="f5"><option></option></select><svg><use href="#chev"/></svg></span><label class="fl" for="f6">区/县</label><span class="fv tagv"><input id="f6" type="text"><svg><use href="#tag"/></svg></span></div>
        <div class="fr r2"><label class="fl" for="f7">楼盘信息</label><span class="fv tagv"><input id="f7" type="text"><svg><use href="#tag"/></svg></span></div>
        <div class="fr r8"><span class="fl"></span><span class="fl">期</span><span class="fv"><input type="text" aria-label="期"></span><span class="fl">幢</span><span class="fv"><input type="text" aria-label="幢"></span><span class="fl">单元</span><span class="fv"><input type="text" aria-label="单元"></span><span class="fl">室</span></div>
        <div class="fr r2"><label class="fl" for="f8">详细地址</label><span class="fv"><input id="f8" type="text"></span></div>
        <div class="fr r6"><label class="fl" for="f9">客户名称</label><span class="fv"><input id="f9" type="text"></span><label class="fl" for="f10">联系电话</label><span class="fv"><input id="f10" type="text"></span><label class="fl" for="f11">建筑面积</label><span class="fv"><input id="f11" type="text"></span></div>
        <div class="fr r2"><span class="fl">图片</span><span class="fv files">文件:(0)<a href="#pic"><svg><use href="#file"/></svg>选择文件</a></span></div>
        <div class="fr r2"><span class="fl">附件</span><span class="fv files">文件:(0)<a href="#att"><svg><use href="#file"/></svg>选择文件</a></span></div>
        <div class="fr r2"><label class="fl" for="f12">状态</label><span class="fv pick"><select id="f12"><option>成功报备</option></select><svg><use href="#chev"/></svg></span></div>
        <div class="fr r1"><span class="fl">产品信息</span></div>
        <div class="products">
          <div class="pager"><span>完全加载(1/1):</span><a href="#p1">1</a><span class="acts"><svg class="i16"><use href="#edit"/></svg><svg class="i16"><use href="#del"/></svg><svg class="i16"><use href="#fdel"/></svg><svg class="i16"><use href="#copy"/></svg><svg class="i16"><use href="#cut"/></svg><svg class="i16"><use href="#paste"/></svg><svg class="i16"><use href="#xls"/></svg></span></div>
          <div class="pg">
            <div class="pg-main">
              <table class="pg-table">
                <thead><tr><th>序号</th><th>产品系列</th><th>产品类别</th><th>产品型号</th><th>数量</th><th class="rest"></th></tr></thead>
                <tbody><tr><td class="no">1</td><td></td><td></td><td></td><td></td><td class="none"></td></tr></tbody>
              </table>
              <div class="pg-h"><svg class="rl"><use href="#chev"/></svg><svg class="rr"><use href="#chev"/></svg></div>
            </div>
            <div class="pg-v"><span><svg class="ru"><use href="#chev"/></svg><svg><use href="#chev"/></svg></span><span><svg class="ru"><use href="#chev"/></svg><svg><use href="#chev"/></svg></span></div>
          </div>
          <div class="sum"><span>合计</span><i></i><i></i><i></i><i></i><i class="wide"></i></div>
        </div>
        <div class="fr r2 memo"><label class="fl" for="f13">备注</label><span class="fv"><textarea id="f13"></textarea><svg class="grip" viewBox="0 0 9 9"><path d="M6 0h2v2H6zM6 3h2v2H6zM3 3h2v2H3zM6 6h2v2H6zM3 6h2v2H3zM0 6h2v2H0z" fill="#bbb"/></svg></span></div>
      </div>
      <div class="rep-h"><i></i></div>
      <div class="rep-h2"><i></i></div>
    </form>
  </div>
</main>
</body>
</html>
```

FILE: styles.css
```css
* { box-sizing: border-box; }
body { margin: 0; background: #fff; color: #22223a; font: 11px/16px "Noto Sans", "Noto Sans CJK SC", sans-serif; }
ul, p, h1, h2 { margin: 0; padding: 0; font-weight: 400; list-style: none; }
a { color: inherit; text-decoration: none; }
i, em { font-style: normal; }
button, input, select, textarea { font: inherit; color: inherit; margin: 0; padding: 0; border: 0; border-radius: 0; background: none; }
button { cursor: pointer; }
select { appearance: none; }
svg { display: block; flex: none; }
.sprite { position: absolute; width: 0; height: 0; }
.rel { position: relative; }
.i10 { width: 10px; height: 10px; }
.i11 { width: 11px; height: 11px; }
.i12 { width: 12px; height: 12px; }
.i14 { width: 14px; height: 14px; }
.i15 { width: 15px; height: 15px; }
.i16 { width: 16px; height: 16px; }

.board { display: grid; grid-template-columns: minmax(0, 930fr) minmax(0, 20fr) minmax(0, 727fr) minmax(0, 28fr) minmax(0, 717fr) minmax(0, 9fr); align-items: start; padding-bottom: 8px; }
.col-left { grid-column: 1; }
.col-mid { grid-column: 3; }
.col-right { grid-column: 5; }

/* numbered annotations */
.hl { position: absolute; }
.hl::before { content: ""; position: absolute; inset: 0; background: #ff96ca; mix-blend-mode: multiply; }
.pin { position: absolute; z-index: 3; width: 22px; height: 22px; border: 2px solid #fff; border-radius: 50%; background: #d4603f; box-shadow: 1px 1px 3px #0005; color: #fff; font: 700 11px/18px "Liberation Sans", sans-serif; text-align: center; }
.pin.tl { left: -14px; top: -10px; }
.pin.tr { right: -10px; top: -6px; }
.pin.above { right: -12px; top: -14px; }
.pin.bl { left: -14px; bottom: -10px; }
.pin.br { right: -6px; bottom: -14px; }
.pin.rm { right: -20px; top: -6px; }
.cursor { position: absolute; z-index: 2; width: 12px; height: 19px; }

/* shared controls */
.btn { height: 21px; min-width: 43px; padding: 0 9px; border: 1px solid #d9d5f3; background: #fff; line-height: 18px; white-space: nowrap; }
.tri { flex: none; width: 0; height: 0; border: 3px solid transparent; border-top: 4px solid #222; border-bottom: 0; }
.tri.pale { border-top-color: #aaa; }
.tri.teal { border-width: 4px 4px 0; border-top-color: #2a7f8a; }
.red { color: #e01818; }
.dim { color: #999; }
input[type="checkbox"] { appearance: none; position: relative; display: block; flex: none; width: 10px; height: 10px; border: 1px solid #d9dcb4; border-top: 1px solid #444; border-left: 1px solid #444; background: #fff; }
input[type="checkbox"]:disabled { background: #c9cf98; }
input[type="checkbox"]:checked::after { content: ""; position: absolute; left: 2px; top: 0; width: 3px; height: 5px; border: solid #111; border-width: 0 2px 2px 0; transform: rotate(40deg); }
.bar-gradient { background: linear-gradient(90deg, #0b1c50 0, #0e2a66 14%, #1a3fae 18%, #1c48b8 29%, #4a46ac 29%, #4a46ac 34%, #3f72bc 34%, #3f72bc 52%, #8a78b8 52%, #8a78b8 55%, #6892a8 55%, #6892a8 72%, #8f7fa4 72%, #8f7fa4 74%, #8fb8a8 74%, #8fb8a8 77%, #8fb0ff 77%, #8fb0ff 95%, #b0b0ff 95%, #b0b0ff 97%, #a8ccf4 97%); }
.win-title { flex: 1; color: #fff; font-size: 12px; line-height: 16px; font-weight: 500; white-space: nowrap; overflow: hidden; }
.mono { margin-left: 4px; font: 700 10px "Liberation Mono", monospace; }
.win-btns { display: flex; gap: 1px; }
.win-btns button { width: 14px; height: 13px; border: 1px solid #fff; border-right-color: #444; border-bottom-color: #444; background: #d9dca8; color: #111; font-size: 9px; line-height: 10px; }
.hbar { display: flex; height: 15px; background: #eaedd6; }
.sb { display: flex; width: 14px; align-items: center; justify-content: center; border: 1px solid #eef0cc; border-right: 1px solid #555; border-bottom: 1px solid #555; background: #d9dca8; }
.sb::before { content: ""; border: 4px solid transparent; }
.sb.l::before { border-right-color: #111; margin-left: -4px; }
.sb.r::before { border-left-color: #111; margin-right: -4px; }
.sb.u { width: 13px; height: 15px; }
.sb.u::before { border-bottom-color: #999; margin-top: -4px; }
.sb.r { margin-left: auto; }
.thumb { border: 1px solid #eef0cc; border-right: 2px solid #555; border-bottom: 2px solid #555; background: #d9dca8; }
.t62 { width: 59%; }
.t77 { width: 72%; }
.vbar { flex: none; width: 13px; margin-top: 23px; background: #ecefd4; }

/* browser window */
.ie { position: relative; margin-right: 5px; padding-top: 4px; border: solid #16386c; border-width: 0 6px 0 4px; background: linear-gradient(#0b4aa8 4px, #fdfdfd 4px); }
.ie::before { content: ""; position: absolute; left: 209px; right: 209px; top: 0; z-index: 1; height: 5px; background: #48505e; }
.ie-title { display: flex; align-items: center; gap: 2px; height: 17px; padding: 0 2px; }
.remote { position: absolute; z-index: 2; left: 274px; top: 4px; display: flex; align-items: center; gap: 22px; width: 369px; height: 27px; padding: 0 10px 0 12px; border: 1px solid #2a3a5c; border-top: 0; border-radius: 0 0 5px 5px; background: linear-gradient(#e6eefa, #cbdcf4); color: #111; font-size: 12px; }
.remote button { display: flex; align-items: center; gap: 5px; white-space: nowrap; }
.remote-tools { display: flex; align-items: center; gap: 14px; margin-left: auto; }
.ie-address { display: flex; align-items: center; gap: 5px; height: 28px; padding: 4px 4px 0; background: #dbdeaa; }
.navs { display: flex; border-radius: 12px; background: #e4e6dc; }
.nav { display: grid; place-items: center; width: 23px; height: 23px; border-radius: 50%; border: 1px solid #7a86a0; }
.back { background: radial-gradient(#2f7fd8, #174a94); }
.fwd { margin-left: 2px; background: radial-gradient(#e4e8f2, #9aa6bc); transform: scaleX(-1); }
.url { display: flex; flex: 514; align-items: center; gap: 4px; min-width: 0; height: 19px; margin-left: 3px; padding-left: 3px; border: 1px solid #666; border-right-color: #eee; border-bottom-color: #eee; background: #fff; }
.url input { flex: 1; min-width: 0; color: #777; font: 9px "Liberation Mono", monospace; }
.bing { flex: 228; }
.url.bing input { font-size: 10px; }
.drop { display: grid; place-items: center; width: 14px; height: 16px; background: #d9dca8; border: 1px solid #888; }
.abtn { display: grid; place-items: center; width: 18px; height: 19px; border: 1px solid #b8b8dc; background: #dfe2f4; }
.abtn.slim { width: 12px; margin-left: -4px; }
.ie-favs { display: flex; align-items: center; gap: 4px; height: 31px; padding: 0 3px; background: #dbdeaa; color: #111; }
.ie-favs .gap { margin-left: 6px; }
.ie-favs .dim { color: #8c8c78; }
.vline { width: 1px; height: 17px; margin: 0 2px 0 7px; background: #aaa; }
.ie-tabs { display: flex; align-items: stretch; gap: 2px; height: 23px; padding-left: 3px; border-bottom: 1px solid #555; background: #dbdeaa; color: #111; white-space: nowrap; }
.qt, .newtab { display: grid; place-items: center; width: 18px; border: 1px solid #f2f4dc; border-right: 2px solid #555; border-bottom: 0; }
.qd { width: 14px; }
.newtab { width: 27px; }
.ie-tab { display: flex; flex: none; align-items: center; gap: 5px; width: 159px; padding: 0 6px 0 4px; border-left: 1px solid #fff; border-right: 2px solid #444; background: #97dfa0; }
.ie-tab b { margin-left: auto; }
.cmds { display: flex; align-items: center; gap: 6px; margin-left: auto; height: 28px; margin-top: -5px; padding-bottom: 2px; }
.cmds .tri + span { margin-left: 4px; }
.cmds .more { align-self: flex-start; margin-left: 3px; }
.ie-body { display: flex; min-height: 502px; }
.side { display: flex; flex: none; flex-direction: column; gap: 3px; width: 27px; }
.side a { height: 66px; padding-top: 8px; border: 1px solid #ddd8f2; border-top: 0; line-height: 13px; text-align: center; }
.side a + a { border-top: 1px solid #ddd8f2; }
.side .on { background: #0094ff; color: #fff; }
.menu { flex: none; width: 155px; height: 479px; padding: 25px 0 0 26px; border-right: 1px solid #dcd6ee; border-bottom: 1px solid #ccc; font-size: 12px; }
.menu a { position: relative; display: block; height: 27px; line-height: 26px; }
.menu a::before { content: ""; position: absolute; left: -7px; top: 9px; border: 4px solid transparent; border-left-color: #222; border-right: 0; }
.hl-menu { left: -24px; top: 0; width: 122px; height: 26px; }

.work { display: flex; flex: 1; flex-direction: column; min-width: 0; margin-left: 12px; }
.tabs { display: flex; gap: 4px; height: 33px; padding: 6px 0 0 13px; border-left: 1px solid #dcd6ee; border-bottom: 2px solid #1985cc; font-size: 12px; }
.tab { position: relative; padding: 0 3px 0 14px; border: 1px solid #dcdfb8; border-bottom: 0; line-height: 25px; white-space: nowrap; }
.tab:first-child { width: 65px; padding: 0; text-align: center; }
.tab small { margin-left: 2px; font-size: 10px; line-height: 12px; vertical-align: 2px; }
.tab.on { border-color: #0092ff; background: #0092ff; color: #fff; }
.work-row { display: flex; flex: 1; min-height: 0; }
.cats { position: relative; flex: none; width: 191px; padding: 33px 0 0 10px; }
.cats-title { line-height: 18px; margin-bottom: 4px; }
.tree li { display: flex; align-items: center; gap: 2px; height: 16px; white-space: nowrap; }
.tree.open { margin-left: 12px; border-left: 1px dotted #cfd3a4; }
.tree.open li { padding-left: 8px; }
.tree.closed { padding-left: 8px; }
.tree.closed .i14 { margin-left: 5px; }
.sel { display: flex; align-items: center; gap: 2px; padding-right: 5px; outline: 1px solid #f0b050; outline-offset: -1px; background: #fbd9a0; }
.plus { width: 9px; height: 9px; border: 1px solid #667; background: linear-gradient(#223, #223) center / 5px 1px no-repeat, linear-gradient(#223, #223) center / 1px 5px no-repeat; }
.splitter { position: absolute; left: 1px; top: 206px; display: grid; align-items: center; width: 9px; height: 42px; border: 1px solid #ddd8f2; border-right: 0; }
.splitter i { margin-left: 3px; border: 3px solid transparent; border-right-color: #777; border-left: 0; width: 0; }
.list { flex: 1; min-width: 0; margin-right: 14px; }
.radios { display: flex; justify-content: flex-end; gap: 13px; height: 32px; margin-right: -3px; line-height: 20px; }
.radios label { display: flex; gap: 8px; align-items: flex-start; }
.radios input { appearance: none; width: 9px; height: 9px; margin-top: 5px; border: 1px solid #999; border-radius: 50%; }
.radios input:checked { border-color: #444; background: radial-gradient(#111 2px, #fff 3px); }

.q-btns { display: flex; justify-content: flex-end; gap: 4px; padding: 0 11px 6px 0; border-bottom: 1px solid #e0dcf2; }
.q-search { display: flex; align-items: center; gap: 4px; margin: 6px 0; padding-left: 4px; white-space: nowrap; }
.q-search input { width: 179px; height: 21px; border: 1px solid #dbd6f2; }
.q-search label { width: 51px; }
.qt-table { width: 100%; table-layout: fixed; border-collapse: separate; border-spacing: 0; text-align: center; }
.qt-table th { height: 22px; padding: 0; border: solid #ddd8f0; border-width: 1px 1px 1px 0; font-weight: 400; }
.qt-table th:first-child { border-left-width: 1px; }
.qt-table th:last-child { border-right: 0; }
.qt-table td { height: 38px; padding: 0; border-bottom: 1px dotted #d4d0da; }
.qt-table tr:last-child td { height: 36px; border: 0; }
.forms th:nth-child(1) { width: 37px; }
.forms th:nth-child(2) { width: 118px; }
.forms th:nth-child(3) { width: 140px; }
.forms th:nth-child(4) { width: 122px; }
.forms th:nth-child(5) { width: 77px; }
.forms th + th { padding-left: 4px; }
.forms td + td { padding-left: 9px; }
.hl-row { left: 182px; top: 63px; width: 240px; height: 28px; }
.c-list { left: 175px; top: 79px; }

/* workflow screenshot */
.flow { position: relative; display: flex; height: 458px; margin: -64px 0 0 89px; border-top: 2px solid #555; background: #fdfdfd; }
.cutmenu { flex: none; width: 93px; padding-top: 23px; border-right: 1px solid #dcd6ee; font-size: 12px; }
.cutmenu span { display: block; height: 27px; line-height: 27px; }
.flow .work { margin-left: 11px; }
.edge { flex: none; width: 13px; margin-left: 4px; background: linear-gradient(90deg, #1c2c48 2px, #a4acb8 2px, #a4acb8 3px, #122038 3px, #122038 4px, transparent 4px), linear-gradient(#00499a, #0868cc); }
.navbox { flex: none; width: 123px; padding: 5px 0 0 5px; border: 1px solid #d6d2f0; border-bottom: 0; font-size: 12px; }
.navbox ul { height: 100%; border-left: 1px solid #e0dcf4; border-top: 1px solid #e0dcf4; }
.navbox li { position: relative; display: flex; align-items: center; gap: 2px; height: 17px; padding-left: 18px; white-space: nowrap; }
.navbox .grp { gap: 0; padding-left: 2px; }
.nav-flow { margin-top: 26px; }
.hl-nav { left: 12px; right: 0; top: 0; bottom: 0; }
.hl-nav.short { left: 8px; right: 29px; }
.hl-nav .br, .hl-next .br { bottom: -8px; }
.designer { display: flex; flex: 1; flex-direction: column; min-width: 0; padding-top: 30px; }
.designer .q-btns { padding-right: 9px; margin-bottom: 6px; }
.canvas { position: relative; flex: 1; border-top: 2px solid #555; border-left: 2px solid #555; overflow: hidden; }
.tools { height: 51px; border-bottom: 1px solid #999; border-right: 1px solid #999; }
.toolrow { display: flex; height: 25px; }
.t { display: grid; place-items: center; width: 25px; height: 25px; }
.t.on { border: 1px solid #33407c; background: #b4b4f4; }
.ptr { width: 9px; height: 13px; }
.sep { width: 1px; height: 11px; margin: 7px 7px 0 6px; background: #999; }
.node { position: absolute; right: 0; width: 99px; height: 38px; border: 2px solid #555; border-right: 0; border-radius: 18px 0 0 18px; background: #fff; color: #111; line-height: 36px; }
.node span { position: absolute; left: 52px; }
.start { top: 61px; border-color: #d84848; }
.end { top: 205px; }
.play { position: absolute; left: 12px; top: 9px; width: 14px; height: 16px; }
.done { position: absolute; left: 8px; top: 9px; width: 20px; height: 18px; }
.wire { position: absolute; right: 40px; top: 99px; width: 10px; height: 107px; }
.hl-node { left: 45px; top: 6px; width: 41px; height: 22px; line-height: 16px; }

.dialog { position: absolute; left: 4px; right: 129px; top: 207px; bottom: 0; padding: 2px 2px 0; border: solid #dbdeaa; border-width: 2px 2px 0; background: #fdfdfd; box-shadow: 1px 0 #333; }
.dlg-title { display: flex; align-items: center; gap: 4px; height: 17px; padding: 0 2px; }
.dlg-btns { display: flex; justify-content: flex-end; gap: 14px; padding: 6px 9px 5px 0; border-bottom: 1px solid #e0dcf4; }
.dlg-tabs { display: flex; align-items: center; height: 39px; padding: 14px 0 0 13px; font-size: 12px; }
.dlg-tabs a { width: 42px; height: 26px; line-height: 26px; text-align: center; }
.dlg-tabs .on { border: 1px dotted #222; border-bottom: 2px solid #1a94f4; color: #1a94f4; line-height: 24px; }
.fields { margin: 0 7px 0 5px; border: solid #ddd8f2; border-width: 0 1px; }
.field { display: flex; height: 21px; border-bottom: 1px solid #ddd8f2; align-items: center; }
.lab { flex: none; width: 139px; height: 20px; line-height: 20px; border-right: 1px solid #ddd8f2; text-align: right; }
.val { position: relative; display: flex; flex: 1; align-items: center; padding-left: 1px; }
.val input[type="text"], .val select { width: 160px; height: 18px; padding: 0 3px; border: 1px solid #dfe2c0; border-top: 1px solid #444; border-left: 1px solid #444; background: #fff; font: 12px "Liberation Sans", sans-serif; }
.val em { margin-left: 9px; color: #e02020; }
.val .i10 { margin-left: 5px; }
.selbtn { position: absolute; left: 146px; top: 1px; display: grid; place-items: center; width: 14px; height: 16px; border: 1px solid #888; background: #d9dca8; pointer-events: none; }
.selbtn::before { content: ""; border: 4px solid transparent; border-top-color: #111; border-bottom: 0; }
.val.checks { padding-left: 4px; }
.checks label { display: flex; align-items: center; gap: 4px; flex: none; width: 57px; white-space: nowrap; }
.hl-next { left: 62px; top: -2px; width: 149px; height: 26px; }

/* form settings screenshots */
.shot { display: flex; margin: 0 15px 0 3px; background: #fdfdfd; }
.shot-a { margin-top: 18px; margin-right: 197px; height: 333px; }
.shot-a .query { flex: 1; min-width: 0; padding-top: 5px; }
.shot-a .q-btns { padding-right: 8px; }
.funcs th:nth-child(1) { width: 36px; }
.funcs th:nth-child(2) { width: 163px; }
.funcs th:nth-child(3) { padding-left: 126px; }
.funcs td:nth-child(2) { padding-left: 4px; text-align: left; }
.hl-funcs { left: 6px; top: 28px; width: 151px; height: 137px; }
.c-funcs { left: 223px; top: 116px; }
.shot-b { margin-top: 11px; }
.sheet { flex: 1; min-width: 0; padding-top: 5px; }
.sheet .q-btns { padding: 0 8px 6px 0; margin-bottom: 4px; }
.sheet .pager { padding-top: 3px; border-top: 1px solid #e0dcf4; }
.pager { display: flex; align-items: center; height: 23px; padding-left: 5px; font-size: 12px; }
.pager a { margin-left: 24px; color: #b02828; font-size: 13px; text-decoration: underline; }
.acts { display: flex; gap: 2px; margin-left: auto; padding-right: 5px; }
.gridwrap { position: relative; display: flex; border-top: 1px solid #e0dcf4; }
.grid { flex: 1; width: 0; table-layout: fixed; border-collapse: collapse; }
.grid th { height: 22px; padding: 0; border: 1px solid #e0dcf4; border-top: 0; font-weight: 400; text-align: center; }
.grid .lt { text-align: left; }
.grid .scr { padding-left: 46px; }
.grid td { position: relative; height: 18px; padding: 0 0 0 1px; border: 1px solid #808080; line-height: 13px; vertical-align: top; white-space: nowrap; }
.grid td:first-child { padding: 0; border-color: #e0dcf4; border-right-color: #808080; font-size: 13px; line-height: 17px; text-align: center; }
.grid .cur td:first-child { background: #dcdcf8; }
.grid td input { margin: 4px auto 0; }
.grid .arial { font: 12px/15px "Liberation Sans", sans-serif; }
.fieldsgrid th:nth-child(1) { width: 28px; }
.fieldsgrid th:nth-child(2) { width: 36px; }
.fieldsgrid th:nth-child(3) { width: 136px; }
.fieldsgrid th:nth-child(4) { width: 56px; }
.fieldsgrid th:nth-child(5), .fieldsgrid th:nth-child(6) { width: 37px; }
.fieldsgrid th:nth-child(7) { width: 108px; }
.hl-cells { left: -9px; top: -6px; width: 89px; height: 83px; }
.cellsel { display: block; position: relative; height: 17px; background: #fff; }
.cellsel select { width: 100%; height: 17px; }
.cellsel svg { position: absolute; right: 2px; top: 5px; width: 10px; height: 8px; color: #222; }
.shot-c { margin: 3px 1px 0 3px; height: 327px; }
.shot-c .navbox { margin-top: 11px; }
.shot-c .sheet { display: flex; flex-direction: column; padding-top: 16px; }
.shot-c .sheet .q-btns { padding-right: 13px; }
.shot-c .pager, .shot-c .gridwrap { margin-right: 5px; }
.shot-c .gridwrap { flex: 1; background: linear-gradient(90deg, transparent 27px, #808080 27px, #808080 28px, transparent 28px); }
.shot-c .grid { align-self: flex-start; background: #fdfdfd; }
.shot-c .edge { width: 10px; margin-left: 0; }
.btnsgrid th:nth-child(1) { width: 28px; }
.btnsgrid th:nth-child(2) { width: 73px; }
.btnsgrid th:nth-child(3) { width: 109px; }
.btnsgrid th:nth-child(4) { width: 136px; }
.btnsgrid th:nth-child(5) { width: 135px; }
.hl-save { left: -4px; top: 1px; width: 116px; height: 14px; }
.code { display: block; height: 15px; margin-top: 1px; background: #0c1d58; color: #fff; font: 11px/15px "Liberation Sans", sans-serif; }
.hl-code { left: -12px; top: -7px; width: 121px; height: 24px; }
.tip { position: absolute; z-index: 2; right: -4px; top: 77px; width: 264px; height: 54px; padding: 1px 0 0 1px; border: 2px solid #333; background: #fff; color: #111; font: 9px/12px "Liberation Mono", monospace; white-space: nowrap; }
.c-code { right: 55px; top: 71px; }

/* customer report form */
.report { position: relative; margin-top: 10px; background: #f3f3f3; }
.rep-bar { display: flex; align-items: center; gap: 5px; justify-content: flex-end; height: 41px; padding: 0 27px 0 0; background: #008ef0; }
.rep-bar button { height: 24px; padding: 0 11px; border: 1px solid #b8e0fc; background: #fff; color: #333; font-size: 12px; line-height: 20px; }
.rep-bar .burger { display: grid; align-content: space-between; width: 19px; height: 19px; margin-left: 7px; padding: 0; border: 0; background: none; }
.burger i { height: 5px; background: #fff; }
.arrows { position: absolute; right: 82px; top: 25px; width: 225px; height: 65px; }
.arrows .pin { left: 61px; top: 43px; }
.rep-title { height: 57px; padding: 0 14px 0 26px; color: #111; font-size: 24px; line-height: 62px; text-align: center; }
.sheetform { margin: 0 14px 0 26px; border: 2px solid #222; background: #fff; color: #111; font-size: 12px; }
.fr { display: grid; height: 35px; border-bottom: 1px solid #777; }
.fr > * { border-left: 1px solid #777; }
.fr > :first-child { border-left: 0; }
.r2 { grid-template-columns: 112fr 561fr; }
.r4 { grid-template-columns: 112fr 223fr 113fr 225fr; }
.r6 { grid-template-columns: 112fr 111fr 112fr 113fr 112fr 113fr; }
.r8 { grid-template-columns: 112fr 80fr 80fr 81fr 79fr 80fr 82fr 79fr; }
.fl { display: flex; align-items: center; justify-content: center; }
.fv { position: relative; display: flex; align-items: center; min-width: 0; font-size: 13px; }
.fv input, .fv select { width: 100%; height: 19px; min-width: 0; }
.fv input:read-only { background: #f0f0f0; }
.pick svg { position: absolute; right: 1px; top: 7px; width: 15px; height: 19px; padding: 5px 2px; background: #eee; color: #222; pointer-events: none; }
.need select { background: #fbe6d9; }
.tagv svg { position: absolute; right: 2px; top: 12px; width: 14px; height: 16px; }
.files { gap: 10px; }
.files a { display: flex; align-items: center; gap: 2px; padding-top: 3px; }
.files svg { width: 12px; height: 15px; }
.products .pager { height: 36px; padding-left: 6px; border-bottom: 1px solid #ddd; color: #333; font-size: 13px; }
.products .pager a { margin-left: 29px; font-size: 14px; }
.products .acts { gap: 4px; padding-right: 6px; }
.pg { display: flex; height: 265px; border-bottom: 1px solid #777; }
.pg-main { display: flex; flex: 1; flex-direction: column; min-width: 0; background: linear-gradient(90deg, #f5f5f5 30px, #777 30px, #777 31px, #fff 31px); }
.pg-table { width: 100%; table-layout: fixed; border-collapse: collapse; color: #333; }
.pg-table th, .pg-table td { height: 35px; padding: 0; border: 1px solid #777; background: #f3f3f3; font-weight: 400; text-align: center; }
.pg-table th { width: 103px; }
.pg-table th:first-child { width: 31px; border-left: 0; border-top: 0; }
.pg-table .rest { width: auto; background: #fff; }
.pg-table td { height: 22px; background: #fff; }
.pg-table .no { border-left: 0; border-bottom-color: #ccc; background: #f3f3f3; font-size: 13px; }
.pg-table .none { border: 0; }
.pg-h { display: flex; align-items: center; justify-content: space-between; height: 16px; margin: auto 0 0 31px; padding: 0 4px; background: #f0f0f0; color: #aaa; }
.pg-h svg, .pg-v svg { width: 10px; height: 8px; }
.rl { transform: rotate(90deg); }
.rr { transform: rotate(-90deg); }
.ru { transform: rotate(180deg); }
.pg-v { display: flex; flex: none; flex-direction: column; width: 17px; background: #f0f0f0; color: #b0b0b0; }
.pg-v span { display: flex; flex: 1; flex-direction: column; align-items: center; justify-content: space-between; padding: 5px 0 21px; }
.pg-v span:first-child { flex: none; height: 35px; padding: 5px 0; border-bottom: 1px solid #777; }
.sum { display: flex; gap: 1px; height: 22px; border-bottom: 1px solid #777; color: #333; line-height: 20px; }
.sum span { width: 30px; border-right: 1px solid #777; white-space: nowrap; }
.sum i { width: 100px; background: #ece9d8; }
.sum .wide { flex: 1; }
.memo { height: 96px; border-bottom: 0; }
.memo textarea { width: 100%; height: 94px; resize: none; }
.grip { position: absolute; right: 2px; bottom: 3px; width: 9px; height: 9px; }
.rep-h { padding: 1px 33px 1px 43px; }
.rep-h i { display: block; height: 5px; background: #cacaca; }
.rep-h2 { background: #eee; }
.rep-h2 i { display: block; width: 28%; height: 3px; background: #c8c8c8; }
```
